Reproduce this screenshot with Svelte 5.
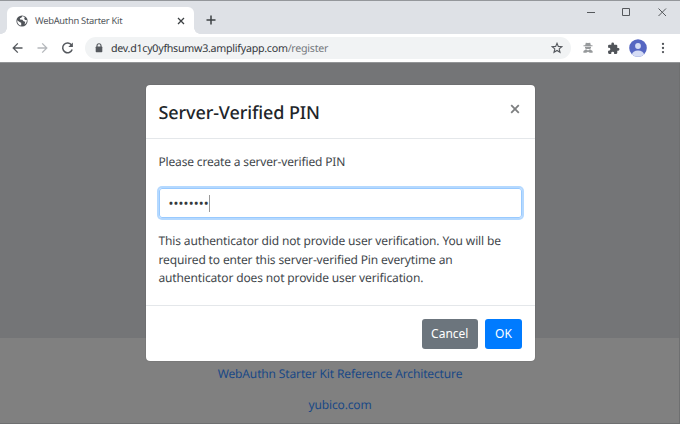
<script>
  let pin = '••••••••';
</script>

<div class="window">
  <header class="tabs">
    <div class="tab">
      <svg class="globe" width="12" height="12" viewBox="0 0 12 12"><circle cx="6" cy="6" r="5.6" fill="#505459"/><path d="M1.1 5.2L4 7.3l1.2.5v2.8C3 10.4 1.2 8.400 1.100 5.200ZM6.200 1.200L5.300 2.700 3.900 3.200 4 4.600 6.400 4.700 7.600 6.300 9.200 6.800 8.600 9.400C10.400 8.200 11 6.600 10.800 5L9.300 5.100 8.200 3.900 8.700 2.100C7.900 1.400 7.100 1.200 6.200 1.200Z" fill="#fff"/></svg>
      <span class="title">WebAuthn Starter Kit</span>
      <svg class="close-tab" width="8" height="8" viewBox="0 0 8 8"><path d="M1 1l6 6M7 1L1 7" stroke="#3c4043" stroke-width="1.300"/></svg>
    </div>
    <svg class="plus" width="10" height="10" viewBox="0 0 10 10"><path d="M5 .5v9M.5 5h9" stroke="#3c4043" stroke-width="1.500"/></svg>
    <svg class="controls" width="84" height="12" viewBox="0 0 84 12" fill="none" stroke="#55585c"><path d="M1 6.500h8"/><path d="M36.500 2.500h7v7h-7z"/><path d="M72.500 2.500l7.500 7.500M80 2.500L72.500 10"/></svg>
  </header>

  <nav class="toolbar">
    <svg class="navicons" width="64" height="16" viewBox="0 0 64 16" fill="none" stroke-width="1.300">
      <path d="M12.500 8H3.500M7.800 3.400L3.200 8l4.600 4.600" stroke="#55595e"/>
      <path d="M27.500 8h9M32.200 3.400L36.800 8l-4.600 4.600" stroke="#b5b8bc"/>
      <path d="M61.600 5A4.900 4.900 0 1 0 62.200 9.500" stroke="#55595e" stroke-width="1.500"/><path d="M62.900 2.500v4.600h-4.600z" fill="#55595e"/>
    </svg>
    <div class="address">
      <svg width="8" height="10" viewBox="0 0 8 10"><path d="M2 4V2.700a2 2 0 0 1 4 0V4" fill="none" stroke="#55595e" stroke-width="1.100"/><rect x=".7" y="3.600" width="6.600" height="5.700" rx=".7" fill="#55595e"/></svg>
      <span class="url">dev.d1cy0yfhsumw3.amplifyapp.com<i>/register</i></span>
      <svg class="star" width="12" height="12" viewBox="0 0 12 12"><path d="M6 1.300l1.300 3.100 3.500.3-2.600 2.200.8 3.400L6 8.500l-3 1.800.8-3.400L1.200 4.700l3.500-.3z" fill="none" stroke="#55595e" stroke-width="1.100"/></svg>
    </div>
    <svg class="spy" width="10" height="12" viewBox="0 0 10 12" fill="#96999b"><path d="M2.800.8L5 1.100 7.200.8 7.800 3.200H9.500v1H.5v-1h1.700z"/><path d="M2 4.800h6v1.400L6.800 7H3.200L2 6.200zM.4 10.800V9.100L3 7.300l2 1.200 2-1.200 2.600 1.800v1.700H6.800L5 9.700l-1.800 1.100z"/></svg>
    <svg class="puzzle" width="13" height="13" viewBox="0 0 24 24"><path d="M20.500 11H19V7a2 2 0 0 0-2-2h-4V3.500a2.500 2.500 0 0 0-5 0V5H4a2 2 0 0 0-2 2v3.800h1.500a2.700 2.700 0 0 1 0 5.400H2V20a2 2 0 0 0 2 2h3.800v-1.500a2.700 2.700 0 0 1 5.400 0V22H17a2 2 0 0 0 2-2v-4h1.500a2.500 2.500 0 0 0 0-5z" fill="#505459"/></svg>
    <svg class="avatar" width="18" height="18" viewBox="0 0 18 18"><defs><clipPath id="face"><circle cx="9" cy="9" r="8.800"/></clipPath></defs><g clip-path="url(#face)"><path d="M0 0h18v18H0z" fill="#5566c2"/><circle cx="9" cy="7" r="2.900" fill="#d5dcf5"/><ellipse cx="9" cy="15.500" rx="6" ry="3.900" fill="#d5dcf5"/></g></svg>
    <svg class="dots" width="4" height="12" viewBox="0 0 4 12" fill="#505459"><circle cx="2" cy="1.900" r="1.150"/><circle cx="2" cy="6" r="1.150"/><circle cx="2" cy="10.100" r="1.150"/></svg>
  </nav>

  <main>
    <div class="backdrop"></div>
    <footer class="links">
      <a href="#architecture" class="arch">WebAuthn Starter Kit Reference Architecture</a>
      <a href="#yubico">yubico.com</a>
    </footer>
    <section class="modal" role="dialog" aria-label="Server-Verified PIN">
      <div class="modal-head">
        <h1>Server-Verified PIN</h1>
        <svg width="10" height="10" viewBox="0 0 10 10"><path d="M1.200 1.200l7.600 7.600M8.800 1.200L1.200 8.800" stroke="#7d7f80" stroke-width="1.800"/></svg>
      </div>
      <div class="modal-body">
        <p class="label">Please create a server-verified PIN</p>
        <div class="field"><span>{pin}</span><b></b></div>
        <p class="help">This authenticator did not provide user verification. You will be<br>required to enter this server-verified Pin everytime an<br>authenticator does not provide user verification.</p>
      </div>
      <div class="modal-foot">
        <button class="cancel">Cancel</button>
        <button class="ok">OK</button>
      </div>
    </section>
  </main>
</div>

<style>
  .window { width: 680px; height: 424px; box-sizing: border-box; display: flex; flex-direction: column; overflow: hidden; border-top: 1px solid #94979b; background: #fff; font-family: "Noto Sans", sans-serif; font-size: 12px; text-rendering: geometricPrecision; }
  svg { display: block; flex: none; }
  .tabs { height: 33px; flex: none; display: flex; align-items: flex-start; background: #dee1e6; padding-left: 7px; }
  .tab { width: 187px; height: 27px; margin-top: 6px; background: #fff; border-radius: 6px 6px 0 0; display: flex; align-items: center; box-sizing: border-box; padding-left: 9px; position: relative; }
  .tab::before, .tab::after { content: ""; position: absolute; bottom: 0; width: 6px; height: 6px; }
  .tab::before { left: -6px; background: radial-gradient(circle at 0 0, transparent 5.500px, #fff 6px); }
  .tab::after { right: -6px; background: radial-gradient(circle at 100% 0, transparent 5.500px, #fff 6px); }
  .title { width: 139px; margin-left: 7px; font-size: 9.300px; letter-spacing: -0.250px; color: #505459; white-space: nowrap; }
  .close-tab { margin-left: 3px; }
  .plus { margin: 14px 0 0 12px; }
  .controls { margin: 5px 10px 0 auto; }
  .toolbar { height: 28px; flex: none; display: flex; align-items: center; border-bottom: 1px solid #939597; }
  .navicons { margin-left: 10px; }
  .address { width: 486px; height: 22px; box-sizing: border-box; margin-left: 11px; border-radius: 11px; background: #f1f3f4; display: flex; align-items: center; padding: 0 8px 0 10px; }
  .url { margin-left: 8px; padding-top: 1.500px; font-size: 10.700px; letter-spacing: -0.270px; color: #34383c; white-space: nowrap; }
  .url i { font-style: normal; color: #75797d; }
  .star { margin-left: auto; }
  .spy { margin-left: 12px; }
  .puzzle { margin-left: 14px; }
  .avatar { margin-left: 9px; }
  .dots { margin-left: 14px; }
  main { flex: 1; min-height: 0; display: flex; flex-direction: column; position: relative; box-sizing: border-box; border-right: 1px solid #6e6f70; border-bottom: 1px solid #6e6f70; }
  .backdrop { height: 275px; background: #747577; }
  .links { flex: 1; background: #808080; display: flex; flex-direction: column; align-items: center; padding: 26px 0 0 1px; gap: 12px; letter-spacing: -0.140px; }
  .links a { color: #194886; text-decoration: none; line-height: 19px; }
  .modal { position: absolute; left: 146px; top: 21.500px; width: 388.500px; height: 276.500px; box-sizing: border-box; border-radius: 4px; background: #fff; box-shadow: 0 0 1px #444; display: flex; flex-direction: column; }
  .modal-head { height: 53.500px; flex: none; border-bottom: 1px solid #e4e7ea; display: flex; align-items: center; justify-content: space-between; padding: 0 14.500px 0 12.500px; }
  .modal-head svg { margin-bottom: 4px; }
  h1 { margin: 4px 0 0; font-size: 18px; font-weight: 500; letter-spacing: -0.100px; line-height: 28px; color: #212529; white-space: nowrap; }
  .modal-body { height: 166px; flex: none; box-sizing: border-box; padding: 14px 12.500px 0; color: #42474c; }
  p { margin: 0; line-height: 18.750px; white-space: nowrap; letter-spacing: -0.140px; }
  .label { letter-spacing: -0.170px; }
  .field { height: 30px; box-sizing: border-box; margin-top: 16.250px; border: 1px solid #99caff; border-radius: 3px; box-shadow: 0 0 0 2px #b5d9ff; display: flex; align-items: center; padding-left: 9px; }
  .field span { font-size: 13px; letter-spacing: 0.150px; color: #34383c; }
  .field b { width: 1px; height: 17px; background: #999; }
  .help { margin-top: 13.750px; }
  .modal-foot { flex: 1; display: flex; justify-content: flex-end; align-items: flex-start; gap: 7px; padding: 13px 12.500px 0; border-top: 1px solid #e4e7ea; }
  button { height: 29.500px; border: 0; border-radius: 3px; padding: 0; color: #fff; font: 12px "Noto Sans", sans-serif; }
  .cancel { width: 56.500px; background: #6c757d; }
  .ok { width: 37px; background: #007bff; }
</style>
